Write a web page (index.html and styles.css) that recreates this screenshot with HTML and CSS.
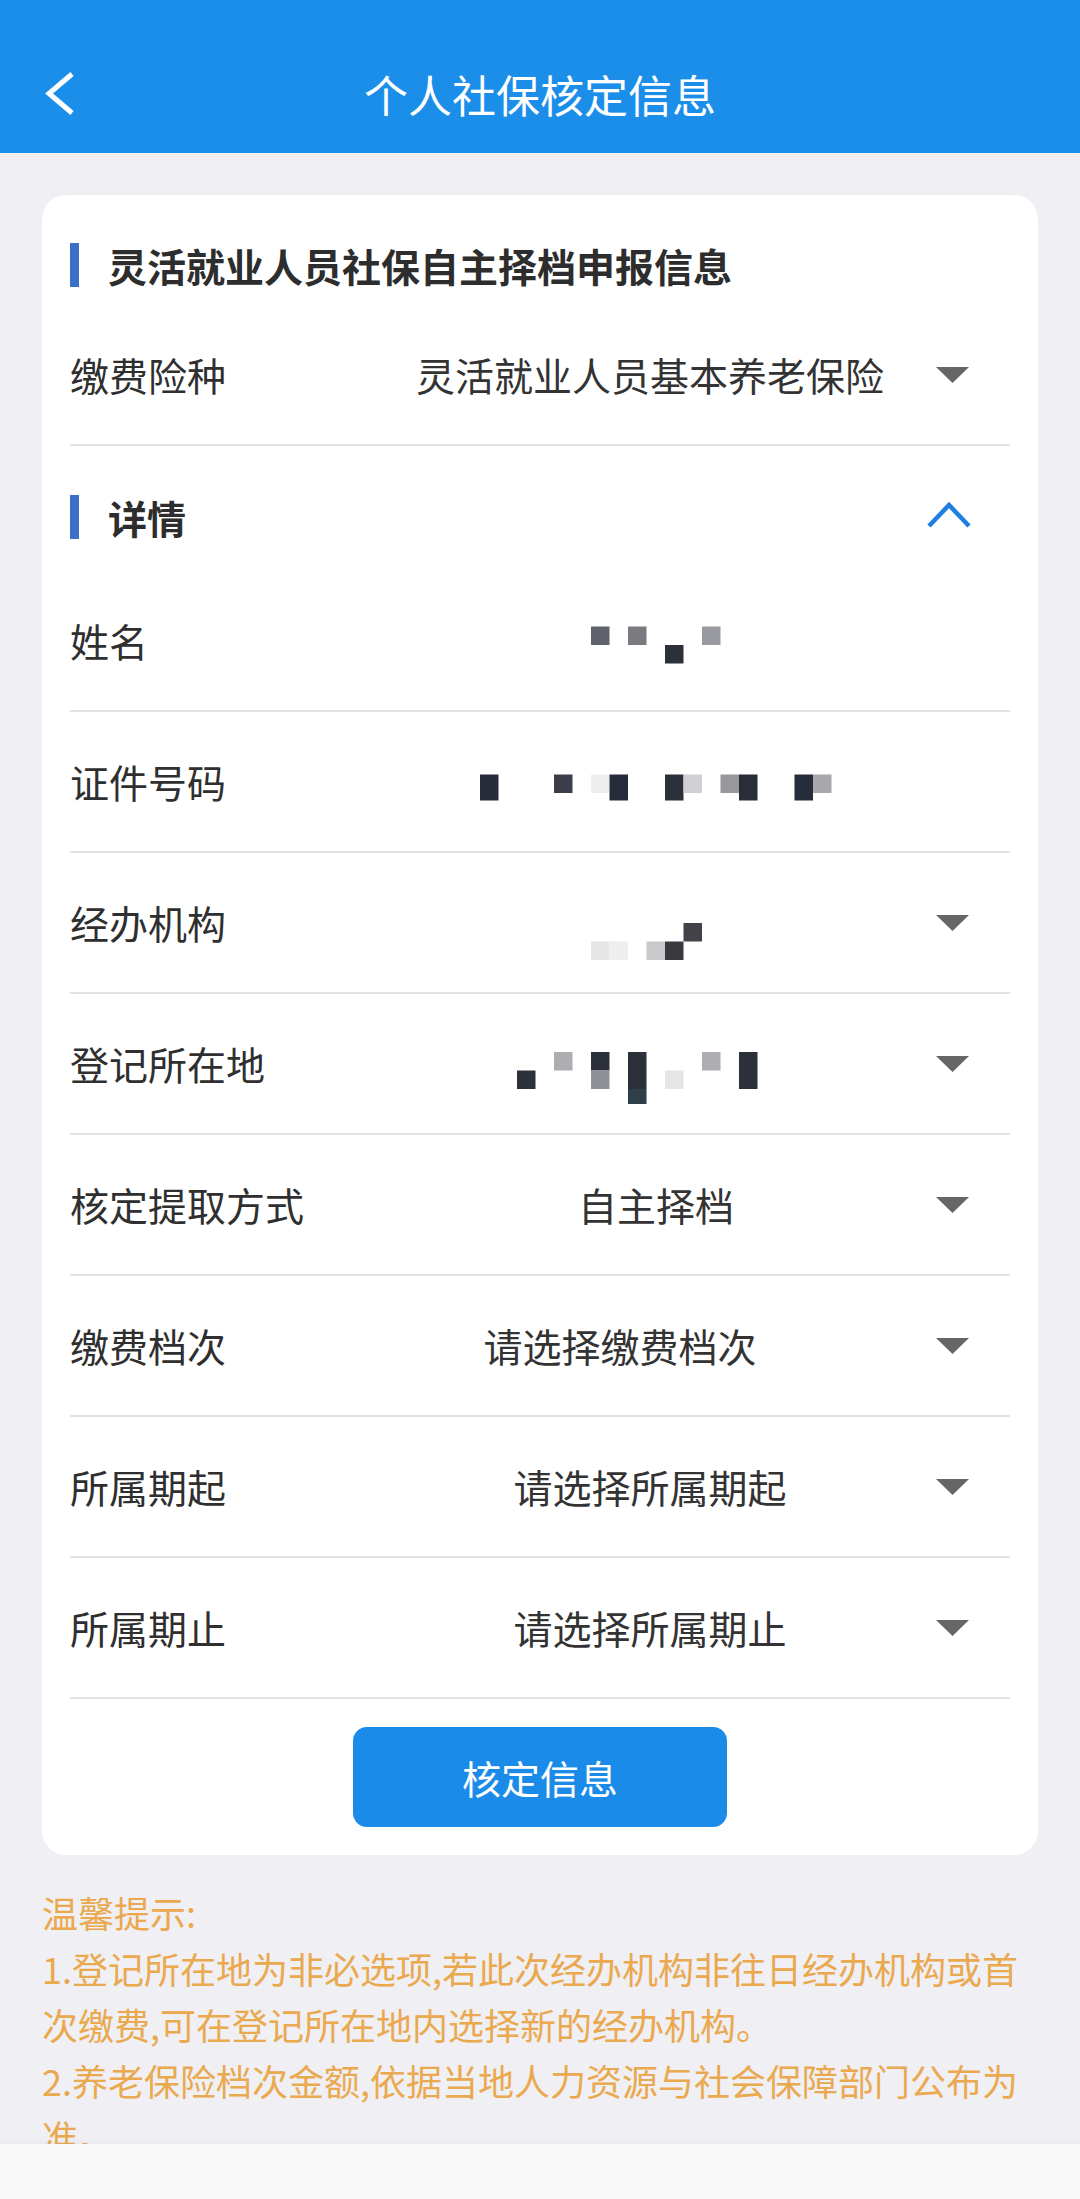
FILE: index.html
```html
<!DOCTYPE html>
<html lang="zh-CN">
<head>
<meta charset="utf-8">
<title>个人社保核定信息</title>
<link rel="stylesheet" href="styles.css">
</head>
<body>
<header class="topbar">
  <div class="nav">
    <div class="nav-left">
      <svg class="back" width="32" height="50" viewBox="0 0 32 50"><polyline points="27,5 4,24.5 27,44" fill="none" stroke="#fff" stroke-width="5" stroke-linejoin="miter"/></svg>
    </div>
    <h1 class="nav-title">个人社保核定信息</h1>
    <div class="nav-right"></div>
  </div>
</header>

<main class="page">
  <section class="card">
    <div class="sec-head sec-head--first">
      <span class="sec-bar"></span>
      <h2 class="sec-title">灵活就业人员社保自主择档申报信息</h2>
    </div>

    <div class="row">
      <span class="label">缴费险种</span>
      <span class="value">灵活就业人员基本养老保险</span>
      <span class="arrow"><svg width="33" height="16" viewBox="0 0 33 16"><polygon points="0,0 33,0 16.5,16" fill="#666"/></svg></span>
    </div>

    <div class="sec-head sec-head--detail">
      <span class="sec-bar"></span>
      <h2 class="sec-title">详情</h2>
      <svg class="chev-up" width="46" height="28" viewBox="0 0 46 28"><polyline points="3,25 23,4 43,25" fill="none" stroke="#1e7fe0" stroke-width="4.5"/></svg>
    </div>

    <div class="row">
      <span class="label">姓名</span>
      <span class="value">
        <svg class="mosaic" width="570" height="80" viewBox="5 -40 570 80">
          <rect x="231" y="-14.5" width="18.5" height="18.5" fill="#5f626b"/>
          <rect x="268" y="-14.5" width="18.5" height="18.5" fill="#7a7b80"/>
          <rect x="305" y="4" width="18.5" height="18.5" fill="#2b303b"/>
          <rect x="342" y="-14.5" width="18.5" height="18.5" fill="#999aa0"/>
        </svg>
      </span>
      <span class="arrow"></span>
    </div>

    <div class="row">
      <span class="label">证件号码</span>
      <span class="value">
        <svg class="mosaic" width="570" height="80" viewBox="5 -40 570 80">
          <rect x="120" y="-7.5" width="18.5" height="26" fill="#262c3a"/>
          <rect x="194" y="-7.5" width="18.5" height="18.5" fill="#3b3e4a"/>
          <rect x="231" y="-7.5" width="18.5" height="18.5" fill="#eeeeee"/>
          <rect x="249.5" y="-7.5" width="18.5" height="26" fill="#262c3a"/>
          <rect x="305" y="-7.5" width="18.5" height="26" fill="#2a2f3a"/>
          <rect x="323.5" y="-7.5" width="18.5" height="18.5" fill="#d0d0d4"/>
          <rect x="360.5" y="-7.5" width="18.5" height="18.5" fill="#97979c"/>
          <rect x="379" y="-7.5" width="18.5" height="26" fill="#282d39"/>
          <rect x="434.5" y="-7.5" width="18.5" height="26" fill="#262c3a"/>
          <rect x="453" y="-7.5" width="18.5" height="18.5" fill="#a8a8ad"/>
        </svg>
      </span>
      <span class="arrow"></span>
    </div>

    <div class="row">
      <span class="label">经办机构</span>
      <span class="value">
        <svg class="mosaic" width="570" height="80" viewBox="5 -40 570 80">
          <rect x="231" y="18.5" width="18.5" height="18.5" fill="#e6e6e6"/>
          <rect x="249.5" y="18.5" width="18.5" height="18.5" fill="#eeeeee"/>
          <rect x="286.5" y="18.5" width="18.5" height="18.5" fill="#c9c9cc"/>
          <rect x="305" y="18.5" width="18.5" height="18.5" fill="#3a3a3e"/>
          <rect x="323.5" y="0" width="18.5" height="18.5" fill="#434249"/>
        </svg>
      </span>
      <span class="arrow"><svg width="33" height="16" viewBox="0 0 33 16"><polygon points="0,0 33,0 16.5,16" fill="#666"/></svg></span>
    </div>

    <div class="row">
      <span class="label">登记所在地</span>
      <span class="value">
        <svg class="mosaic" width="570" height="80" viewBox="5 -40 570 80">
          <rect x="157" y="6.5" width="18.5" height="18.5" fill="#2b303b"/>
          <rect x="194" y="-12" width="18.5" height="18.5" fill="#aeaeb2"/>
          <rect x="231" y="-12" width="18.5" height="18.5" fill="#2b303b"/>
          <rect x="231" y="6.5" width="18.5" height="18.5" fill="#8e9096"/>
          <rect x="268" y="-12" width="18.5" height="37" fill="#2b303b"/>
          <rect x="268" y="25" width="18.5" height="18.5" fill="#2f3f48"/>
          <rect x="305" y="6.5" width="18.5" height="18.5" fill="#e5e5e5"/>
          <rect x="342" y="-12" width="18.5" height="18.5" fill="#aeaeb2"/>
          <rect x="379" y="-12" width="18.5" height="37" fill="#2b303b"/>
        </svg>
      </span>
      <span class="arrow"><svg width="33" height="16" viewBox="0 0 33 16"><polygon points="0,0 33,0 16.5,16" fill="#666"/></svg></span>
    </div>

    <div class="row">
      <span class="label">核定提取方式</span>
      <span class="value value--shift-right">自主择档</span>
      <span class="arrow"><svg width="33" height="16" viewBox="0 0 33 16"><polygon points="0,0 33,0 16.5,16" fill="#666"/></svg></span>
    </div>

    <div class="row">
      <span class="label">缴费档次</span>
      <span class="value value--shift-left">请选择缴费档次</span>
      <span class="arrow"><svg width="33" height="16" viewBox="0 0 33 16"><polygon points="0,0 33,0 16.5,16" fill="#666"/></svg></span>
    </div>

    <div class="row">
      <span class="label">所属期起</span>
      <span class="value">请选择所属期起</span>
      <span class="arrow"><svg width="33" height="16" viewBox="0 0 33 16"><polygon points="0,0 33,0 16.5,16" fill="#666"/></svg></span>
    </div>

    <div class="row">
      <span class="label">所属期止</span>
      <span class="value">请选择所属期止</span>
      <span class="arrow"><svg width="33" height="16" viewBox="0 0 33 16"><polygon points="0,0 33,0 16.5,16" fill="#666"/></svg></span>
    </div>

    <div class="actions">
      <button class="btn" type="button">核定信息</button>
    </div>
  </section>

  <section class="tips">
    <p>温馨提示:</p>
    <p>1.登记所在地为非必选项,若此次经办机构非往日经办机构或首次缴费,可在登记所在地内选择新的经办机构。</p>
    <p>2.养老保险档次金额,依据当地人力资源与社会保障部门公布为准。</p>
  </section>
</main>

<div class="home-bar"></div>
</body>
</html>
```

FILE: styles.css
```css
* {
  box-sizing: border-box;
}

html, body {
  margin: 0;
  padding: 0;
}

body {
  background: #efeff4;
  font-family: "Noto Sans CJK SC", "Noto Sans", sans-serif;
  color: #333;
  height: 2199px;
  overflow: hidden;
}

.topbar {
  background: #1b8eea;
  height: 153px;
  padding-top: 35px;
}

.nav {
  height: 118px;
  display: grid;
  grid-template-columns: 1fr auto 1fr;
  align-items: center;
}

.nav-left {
  padding-left: 45px;
  display: flex;
  align-items: center;
}

.back {
  display: block;
}

.nav-title {
  margin: 0;
  font-size: 44px;
  font-weight: 400;
  color: #fff;
  line-height: 1.2;
}

.page {
  padding: 42px 42px 0;
}

.card {
  background: #fff;
  border-radius: 24px;
  padding: 0 28px 28px;
}

.sec-head {
  display: flex;
  align-items: center;
}

.sec-head--first {
  padding-top: 48px;
  padding-bottom: 18px;
}

.sec-head--detail {
  padding-top: 49px;
  padding-bottom: 32px;
}

.sec-bar {
  width: 9px;
  height: 44px;
  background: #3c6fc6;
  flex: none;
}

.sec-title {
  margin: 0 0 0 29px;
  font-size: 39px;
  font-weight: 700;
  line-height: 44px;
  color: #2d2d2d;
  flex: 1;
}

.chev-up {
  display: block;
  margin-right: 38px;
  margin-top: -4px;
}

.row {
  display: grid;
  grid-template-columns: 295px 1fr 75px;
  align-items: center;
  height: 141px;
  border-bottom: 2px solid #e2e2e2;
}

.label {
  font-size: 39px;
  line-height: 1.2;
  color: #2f2f2f;
  white-space: nowrap;
}

.value {
  font-size: 39px;
  line-height: 1.2;
  color: #333;
  text-align: center;
  white-space: nowrap;
  display: flex;
  justify-content: center;
  align-items: center;
}

.value--shift-right {
  padding-left: 12px;
}

.value--shift-left {
  padding-right: 60px;
}

.mosaic {
  display: block;
}

.arrow {
  display: flex;
  align-items: center;
  padding-left: 1px;
}

.arrow svg {
  display: block;
}

.actions {
  display: flex;
  justify-content: center;
  padding-top: 28px;
}

.btn {
  width: 374px;
  height: 100px;
  border: none;
  border-radius: 14px;
  background: #1a8be8;
  color: #fff;
  font-family: inherit;
  font-size: 39px;
  line-height: 1;
  padding: 0;
}

.tips {
  margin-top: 29px;
  color: #eaa94e;
  font-size: 36px;
  line-height: 56px;
}

.tips p {
  margin: 0;
}

.home-bar {
  position: fixed;
  left: 0;
  right: 0;
  bottom: 0;
  height: 55px;
  background: #f8f8f8;
  box-shadow: 0 -3px 6px rgba(0, 0, 0, 0.03);
}
```
